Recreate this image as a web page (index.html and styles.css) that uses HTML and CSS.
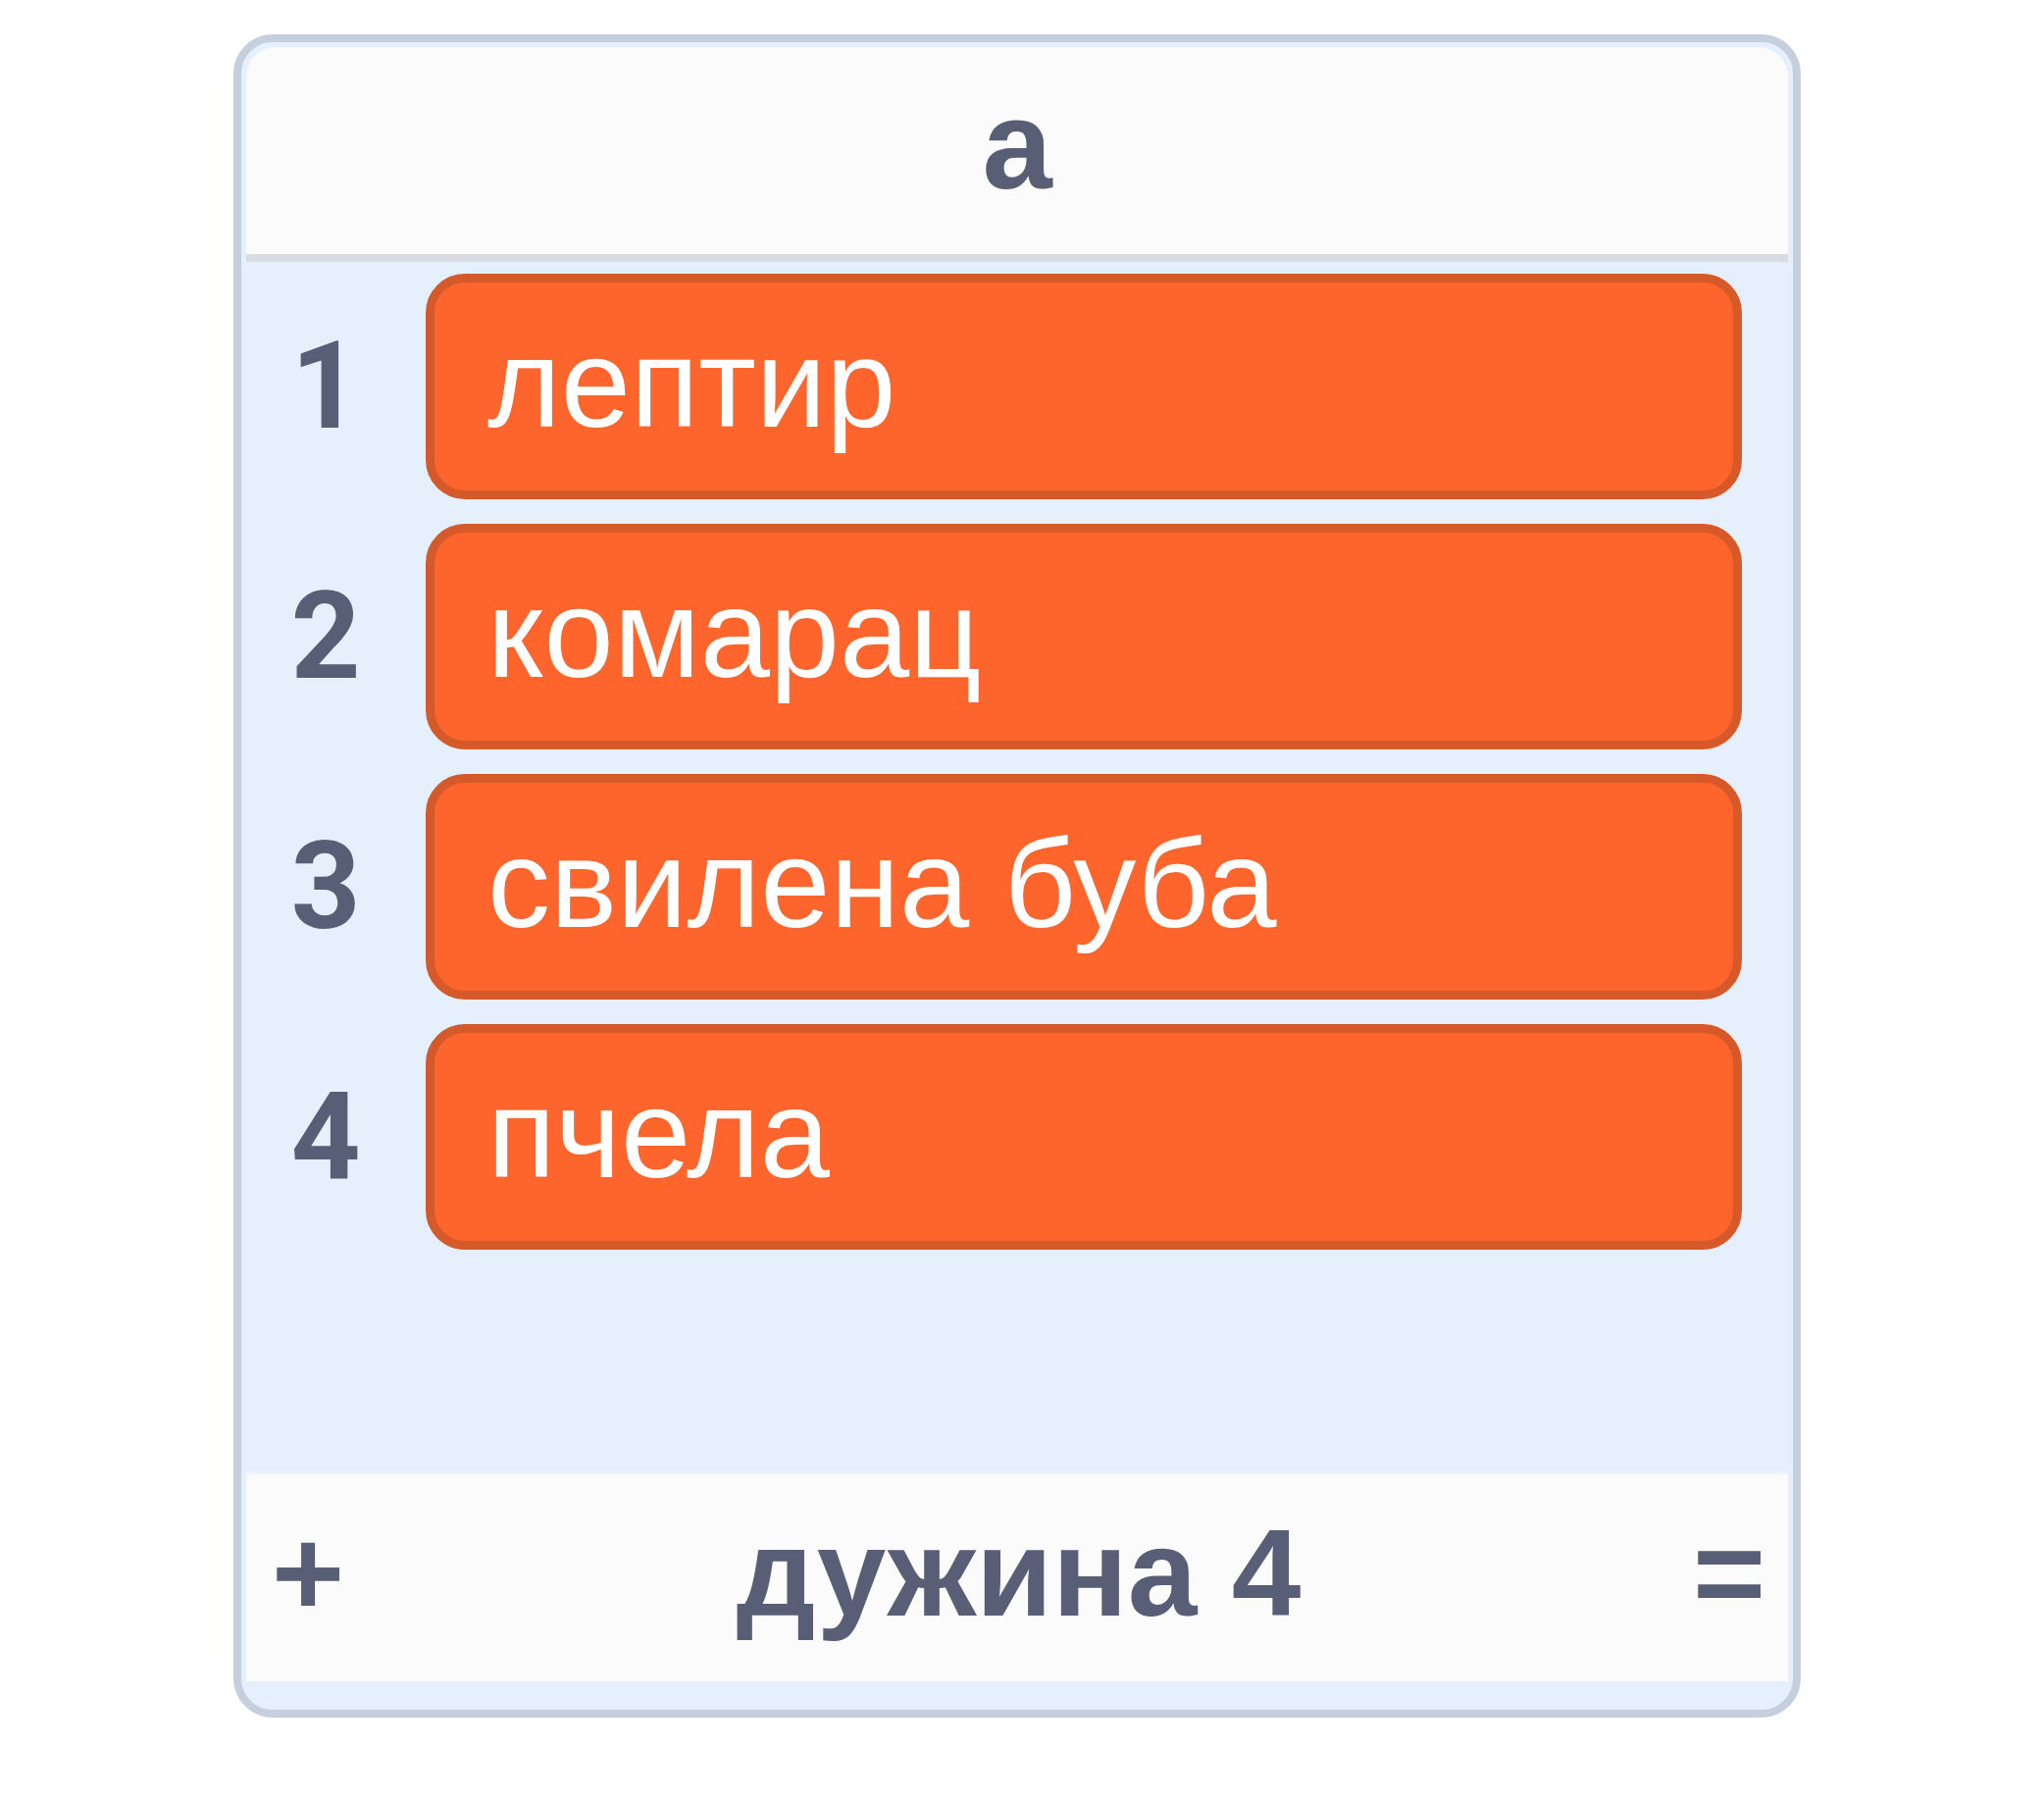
FILE: index.html
```html
<!DOCTYPE html>
<html lang="sr">
<head>
<meta charset="utf-8">
<title>a</title>
<link rel="stylesheet" href="styles.css">
</head>
<body>
<div class="page">
  <div class="monitor">
    <div class="header">a</div>
    <div class="list">
      <div class="row"><div class="index">1</div><div class="value">лептир</div></div>
      <div class="row"><div class="index">2</div><div class="value">комарац</div></div>
      <div class="row"><div class="index">3</div><div class="value">свилена буба</div></div>
      <div class="row"><div class="index">4</div><div class="value">пчела</div></div>
    </div>
    <div class="footer">
      <span class="btn">+</span>
      <span class="length">дужина 4</span>
      <span class="btn">=</span>
    </div>
  </div>
</div>
</body>
</html>
```
FILE: styles.css
```css
html, body {
  margin: 0;
  padding: 0;
  background: #ffffff;
}
body {
  font-family: "Liberation Sans", Arial, Helvetica, sans-serif;
  color: #575e75;
}
.page {
  padding: 35px 0 0 238px;
}
.monitor {
  box-sizing: border-box;
  width: 1598px;
  height: 1716px;
  border: 8px solid #c5cfdd;
  border-radius: 40px;
  padding: 5px;
  background: #e5f0fc;
  display: flex;
  flex-direction: column;
  overflow: hidden;
}
.header {
  background: #fafbfa;
  border-bottom: 8px solid #d9dce3;
  border-radius: 30px 30px 0 0;
  display: flex;
  align-items: center;
  justify-content: center;
  font-weight: bold;
  font-size: 128px;
  line-height: 1;
  padding-bottom: 12px;
  height: 199px;
}
.list {
  flex: 1;
  padding-top: 12px;
  display: flex;
  flex-direction: column;
  gap: 25px;
}
.row {
  display: flex;
  align-items: center;
  height: 230px;
}
.index {
  width: 162px;
  text-align: center;
  font-family: Roboto, "Liberation Sans", Arial, sans-serif;
  font-weight: bold;
  font-size: 124px;
  line-height: 1;
  margin-right: 21px;
}
.value {
  box-sizing: border-box;
  flex: 1;
  margin-right: 47px;
  height: 230px;
  background: #fd652c;
  border: 9px solid #d6592a;
  border-radius: 40px;
  padding-left: 54px;
  color: #ffffff;
  font-size: 128px;
  line-height: 1;
  display: flex;
  align-items: center;
  padding-bottom: 6px;
}
.footer {
  height: 214px;
  margin-bottom: 24px;
  background: #fafbfa;
  border-top: 3px solid #eef4fb;
  box-sizing: border-box;
  display: flex;
  align-items: center;
  justify-content: space-between;
  padding: 0 23px 10px 26px;
  font-weight: bold;
  font-size: 127px;
  line-height: 1;
}
.btn {
  width: 74px;
  text-align: center;
}
```
